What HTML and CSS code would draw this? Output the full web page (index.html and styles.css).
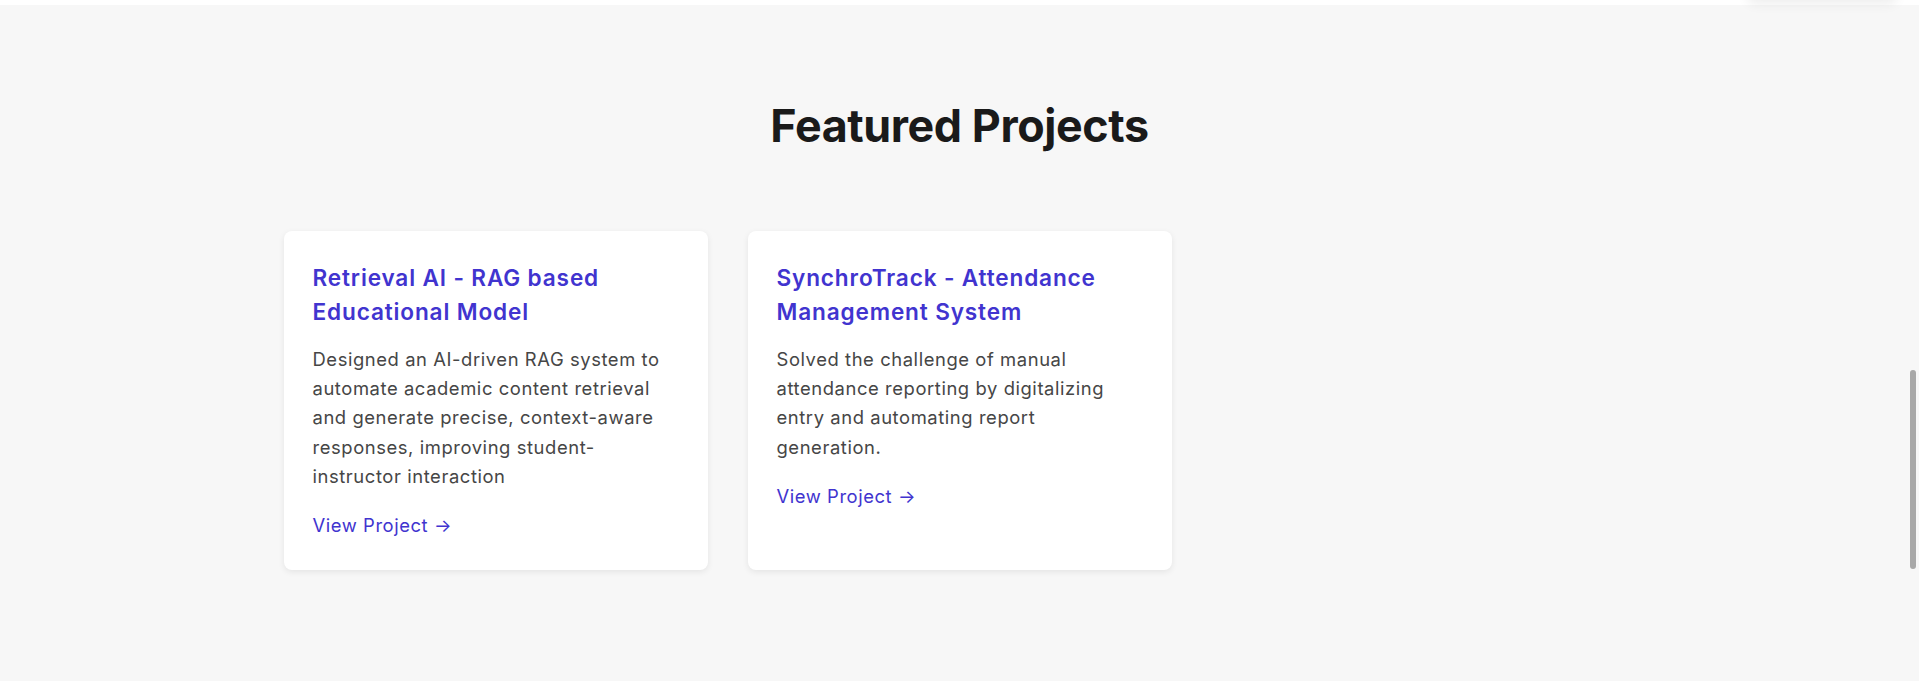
FILE: index.html
```html
<!DOCTYPE html>
<html lang="en">
<head>
<meta charset="utf-8">
<title>Featured Projects</title>
<link rel="stylesheet" href="styles.css">
</head>
<body>
<div class="top-strip"></div>
<div class="floating-shadow"></div>
<section class="projects">
  <h2 class="projects-title">Featured Projects</h2>
  <div class="projects-grid">
    <article class="card">
      <h3 class="card-title">Retrieval AI - RAG based Educational Model</h3>
      <p class="card-desc">Designed an AI-driven RAG system to automate academic content retrieval and generate precise, context-aware responses, improving student-instructor interaction</p>
      <a class="card-link" href="#">View Project →</a>
    </article>
    <article class="card">
      <h3 class="card-title">SynchroTrack - Attendance Management System</h3>
      <p class="card-desc">Solved the challenge of manual attendance reporting by digitalizing entry and automating report generation.</p>
      <a class="card-link" href="#">View Project →</a>
    </article>
  </div>
</section>
<div class="scroll-thumb"></div>
</body>
</html>
```

FILE: styles.css
```css
html, body {
  margin: 0;
  padding: 0;
  height: 100%;
  overflow: hidden;
}

body {
  background: #f7f7f7;
  font-family: Inter, "Noto Sans", sans-serif;
  color: #1a1a1a;
}

.top-strip {
  height: 5px;
  background: #ffffff;
}

.floating-shadow {
  position: fixed;
  top: -40px;
  right: 22px;
  width: 150px;
  height: 40px;
  background: #ffffff;
  border-radius: 8px;
  box-shadow: 0 4px 12px rgba(0, 0, 0, 0.07);
}

.projects {
  padding: 95px 24px 0;
}

.projects-title {
  margin: 0 0 77px;
  text-align: center;
  font-size: 44.8px;
  line-height: 1.2;
  font-weight: 700;
  color: #1a1a1a;
  letter-spacing: -0.4px;
}

.projects-grid {
  max-width: 1352px;
  margin: 0 auto;
  display: grid;
  grid-template-columns: repeat(3, 1fr);
  gap: 40px;
}

.card {
  background: #ffffff;
  border-radius: 8px;
  padding: 30px 29px 29px;
  box-shadow: 0 2px 6px rgba(0, 0, 0, 0.08);
}

.card-title {
  margin: 0 0 16px;
  font-size: 22.6px;
  line-height: 1.5;
  font-weight: 600;
  color: #4134cf;
  letter-spacing: 0.85px;
}

.card-desc {
  margin: 0 0 19.4px;
  font-size: 18.4px;
  line-height: 1.6;
  color: #464646;
  letter-spacing: 0.58px;
}

.card-link {
  display: inline-block;
  font-size: 18.4px;
  line-height: 1.6;
  color: #4134cf;
  text-decoration: none;
  letter-spacing: 0.57px;
}

.scroll-thumb {
  position: fixed;
  right: 3px;
  top: 370px;
  width: 6px;
  height: 199px;
  background: #a8a8a8;
  border-radius: 3px;
}
```
